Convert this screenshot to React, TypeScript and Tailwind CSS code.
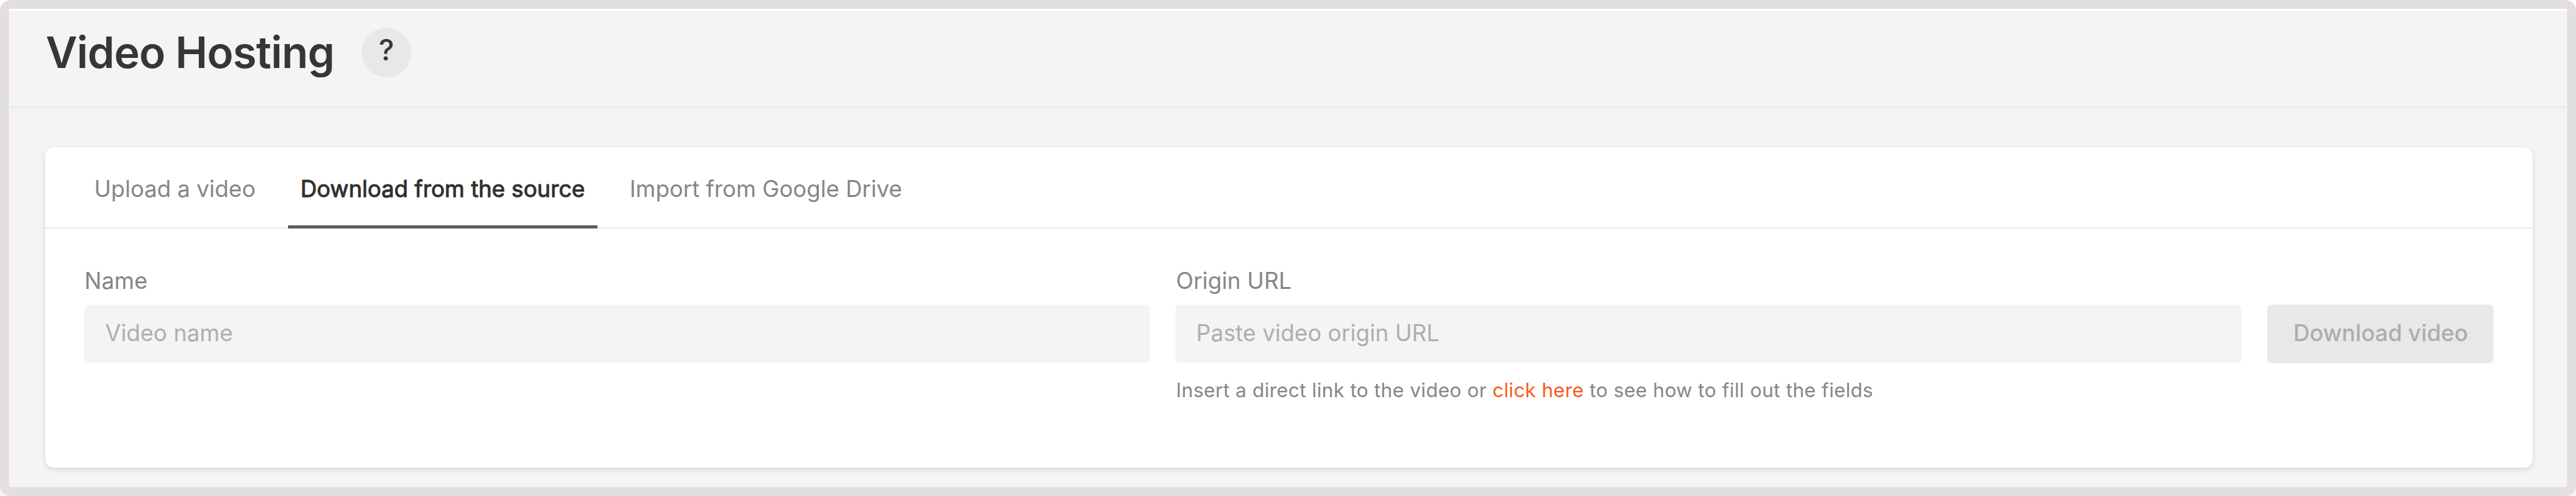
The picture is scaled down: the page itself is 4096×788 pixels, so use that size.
type FieldProps = { label: string; placeholder: string; className: string; labelClassName?: string; children?: React.ReactNode };

function Field({ label, placeholder, className, labelClassName = "", children }: FieldProps) {
  return (
    <label className={`flex flex-col text-[#868686] ${className}`}>
      <span className={labelClassName}>{label}</span>
      <input
        placeholder={placeholder}
        className="mt-[15.3px] h-[93px] rounded-[7px] bg-[#f4f4f4] px-[33px] pb-[2.4px] outline-none placeholder:text-[#aeaeae]"
      />
      {children}
    </label>
  );
}

export default function App() {
  return (
    <div className="h-[788px] w-[4096px] overflow-hidden bg-[linear-gradient(#fff_50%,#f4f4f4_50%)] font-[Inter,sans-serif] text-[36.14px] leading-[44px]">
      <div className="flex h-full flex-col overflow-hidden rounded-[17px] bg-[#e3dfde] p-[13.77px]">
        <main className="flex min-h-0 flex-1 flex-col overflow-hidden rounded-[4px] bg-[#f4f4f4]">
          <header className="flex h-[158.3px] shrink-0 items-start border-t-[3.44px] border-b-[3px] border-t-white border-b-[#e9e9e9] pl-[58.5px]">
            <h1 className="mt-[24.5px] w-[502.5px] pl-[0.6px] text-[68.84px] leading-[84px] font-semibold tracking-[-0.84px] whitespace-nowrap text-[#363636]">
              Video Hosting
            </h1>
            <button className="mt-[27.5px] flex size-[79.2px] items-center justify-center rounded-full bg-[#e8e8e8] pb-[10px] text-[46px] leading-none font-medium text-[#363636]">
              ?
            </button>
          </header>
          <section className="mt-[62px] ml-[58.5px] h-[509.4px] w-[3955px] rounded-[14px] bg-white shadow-[0_3px_10px_rgba(0,0,0,0.12)]">
            <nav className="flex h-[129px] items-stretch border-b-2 border-[#e8e8e8] pl-[55px] text-[#868686]">
              <button className="mb-[-2px] w-[330.5px] pt-[5px] pb-[2px] pl-[22.4px] text-left whitespace-nowrap">
                Upload a video
              </button>
              <button className="mb-[-2px] w-[492.2px] border-b-[5px] border-[#5b5b5b] pt-[8px] pl-[20px] text-left whitespace-nowrap text-[#303030] [-webkit-text-stroke:1px_#303030]">
                Download from the source
              </button>
              <button className="mb-[-2px] pt-[5px] pb-[2px] pl-[51.2px] text-left whitespace-nowrap">
                Import from Google Drive
              </button>
            </nav>
            <form className="flex items-start pt-[61.3px] pl-[62px]">
              <Field label="Name" placeholder="Video name" className="w-[1693.5px]" />
              <Field
                label="Origin URL"
                placeholder="Paste video origin URL"
                className="ml-[41.3px] w-[1695px]"
                labelClassName="pl-[1px]"
              >
                <p className="mt-[23.7px] pl-[1px] text-[30.98px] leading-[40px] tracking-[0.36px] whitespace-nowrap">
                  Insert a direct link to the video or <a className="text-[#fb5a1a]">click here</a> to see how to fill out the fields
                </p>
              </Field>
              <button
                type="button"
                className="mt-[59.3px] ml-[41.3px] h-[93px] w-[360px] rounded-[7px] bg-[#e8e8e8] pb-[2.4px] font-medium whitespace-nowrap text-[#adadad]"
              >
                Download video
              </button>
            </form>
          </section>
        </main>
      </div>
    </div>
  );
}
